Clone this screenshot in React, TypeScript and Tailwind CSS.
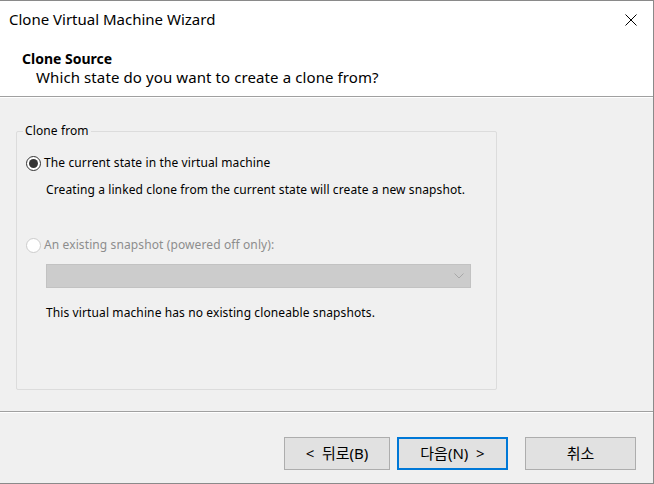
import React from 'react';

const font = "font-['Noto_Sans','Noto_Sans_CJK_KR',sans-serif]";

function Radio({ checked, disabled }: { checked?: boolean; disabled?: boolean }) {
  return (
    <span
      className={`flex h-[15px] w-[15px] shrink-0 items-center justify-center rounded-full border ${
        disabled ? 'border-[#cccccc] bg-white' : 'border-[#333333] bg-white'
      }`}
    >
      {checked && <span className="h-[9px] w-[9px] rounded-full bg-[#333333]" />}
    </span>
  );
}

export default function App() {
  return (
    <div
      className={`${font} flex h-[484px] w-[654px] flex-col border-t border-r border-b border-[#8a8a8a] bg-[#f0f0f0] text-[12px] tracking-[0.11px] text-black`}
    >
      {/* Header */}
      <div className="h-[95px] shrink-0 bg-white">
        <div className="flex h-[37px] items-center justify-between pl-[9px] pr-[16px] tracking-normal">
          <div className="text-[15px] text-[#000]">Clone Virtual Machine Wizard</div>
          <svg width="12" height="12" viewBox="0 0 12 12" className="text-black">
            <path d="M0.5 0.5L11.5 11.5M11.5 0.5L0.5 11.5" stroke="currentColor" strokeWidth="1" />
          </svg>
        </div>
        <div className="pl-[22px] pt-[11px] text-[14px] font-bold leading-[19px] tracking-normal">Clone Source</div>
        <div className="pl-[36px] text-[15px] leading-[19px] tracking-[0.1px]">
          Which state do you want to create a clone from?
        </div>
      </div>
      <div className="h-px shrink-0 bg-[#a0a0a0]" />
      <div className="h-px shrink-0 bg-white" />

      {/* Body */}
      <div className="flex-1 px-[16px] pt-[33px]">
        <div className="relative h-[259px] w-[481px] rounded-[2px] border border-[#dcdcdc]">
          <div className="absolute left-[6px] top-[-9px] bg-[#f0f0f0] px-[2px] leading-[16px]">Clone from</div>
          <div className="flex flex-col pl-[9px] pt-[23px]">
            <div className="flex items-center gap-[3px]">
              <Radio checked />
              <span className="leading-[16px]">The current state in the virtual machine</span>
            </div>
            <div className="pl-[20px] pt-[11px] leading-[16px]">
              Creating a linked clone from the current state will create a new snapshot.
            </div>
            <div className="mt-[39px] flex items-center gap-[3px] text-[#8d8d8d]">
              <Radio disabled />
              <span className="leading-[16px]">An existing snapshot (powered off only):</span>
            </div>
            <div className="ml-[20px] mt-[11px] flex h-[24px] w-[425px] items-center justify-end border border-[#c2c2c2] bg-[#cccccc] pr-[6px]">
              <svg width="10" height="6" viewBox="0 0 10 6">
                <path d="M0.5 0.5L5 5L9.5 0.5" fill="none" stroke="#a8a8a8" strokeWidth="1" />
              </svg>
            </div>
            <div className="pl-[20px] pt-[17px] leading-[16px]">
              This virtual machine has no existing cloneable snapshots.
            </div>
          </div>
        </div>
      </div>

      <div className="h-px shrink-0 bg-[#a0a0a0]" />
      <div className="h-px shrink-0 bg-white" />

      {/* Buttons */}
      <div className="flex h-[70px] shrink-0 items-start pl-[284px] pt-[24px] tracking-normal">
        <button className="flex h-[33px] w-[106px] items-center justify-center border border-[#adadad] bg-[#e1e1e1] text-[15px]">
          &lt;&nbsp; 뒤로(B)
        </button>
        <button className="ml-[7px] flex h-[33px] w-[111px] items-center justify-center border-2 border-[#0078d7] bg-[#e1e1e1] text-[15px]">
          다음(N)&nbsp; &gt;
        </button>
        <button className="ml-[17px] flex h-[33px] w-[111px] items-center justify-center border border-[#adadad] bg-[#e1e1e1] text-[15px]">
          취소
        </button>
      </div>
    </div>
  );
}
